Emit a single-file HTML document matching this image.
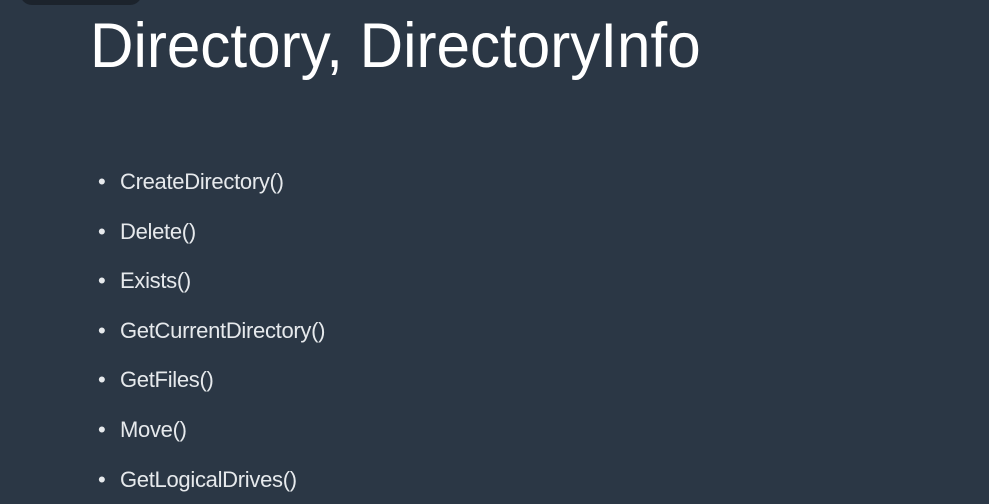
<!DOCTYPE html>
<html><head><style>
html,body{margin:0;padding:0;}
body{width:989px;height:496px;background:#2b3745;position:relative;overflow:hidden;font-family:"Liberation Sans",sans-serif;color:#f2f4f6;}
.pill{position:absolute;left:20px;top:-20px;width:122px;height:25px;background:#1c232c;border-radius:12px;}
h1{position:absolute;left:90px;top:10px;margin:0;font-weight:normal;font-size:63px;line-height:72px;transform:scaleX(0.955);transform-origin:left;white-space:nowrap;color:#fff;}
ul{position:absolute;left:98px;top:157px;margin:0;padding:0;list-style:none;}
li{font-size:22px;line-height:49.6px;height:49.6px;white-space:nowrap;color:#e6e9ec;letter-spacing:-0.3px;}
li:before{content:"•";display:inline-block;width:22px;font-size:22px;}
</style></head><body>
<div class="pill"></div>
<h1>Directory, DirectoryInfo</h1>
<ul>
<li>CreateDirectory()</li>
<li>Delete()</li>
<li>Exists()</li>
<li>GetCurrentDirectory()</li>
<li>GetFiles()</li>
<li>Move()</li>
<li>GetLogicalDrives()</li>
</ul>
</body></html>
